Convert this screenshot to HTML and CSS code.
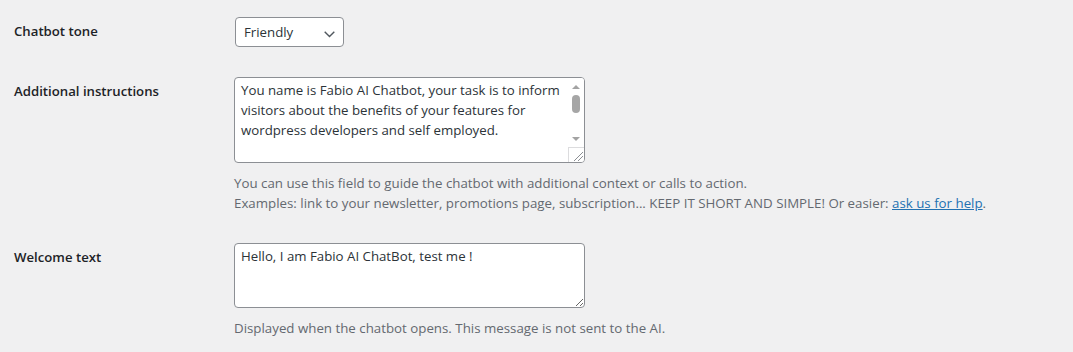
FILE: index.html
```html
<!DOCTYPE html>
<html lang="en">
<head>
  <meta charset="UTF-8" />
  <title>Chatbot settings</title>
  <link rel="stylesheet" href="styles.css">
</head>
<body>
  <div class="wrap">
    <table class="form-table">
      <tr>
        <th><label for="tone">Chatbot tone</label></th>
        <td>
          <select id="tone">
            <option>Friendly</option>
            <option>Professional</option>
            <option>Casual</option>
          </select>
        </td>
      </tr>
      <tr>
        <th><label for="instructions">Additional instructions</label></th>
        <td>
          <div class="field">
            <textarea id="instructions" class="tall">You name is Fabio AI Chatbot, your task is to inform visitors about the benefits of your features for wordpress developers and self employed.</textarea>
            <div class="scrollbar" aria-hidden="true">
              <span class="arrow up"></span>
              <span class="track"><span class="thumb"></span></span>
              <span class="arrow down"></span>
              <span class="corner">
                <svg width="14" height="13" viewBox="0 0 14 13"><path d="M4 12L13 3M8 12L13 7" stroke="#8c8f94" stroke-width="1"/></svg>
              </span>
            </div>
          </div>
          <p class="description">You can use this field to guide the chatbot with additional context or calls to action.<br>
            Examples: link to your newsletter, promotions page, subscription... KEEP IT SHORT AND SIMPLE! Or easier: <a href="#">ask us for help</a>.</p>
        </td>
      </tr>
      <tr>
        <th><label for="welcome">Welcome text</label></th>
        <td>
          <textarea id="welcome" class="short">Hello, I am Fabio AI ChatBot, test me !</textarea>
          <p class="description">Displayed when the chatbot opens. This message is not sent to the AI.</p>
        </td>
      </tr>
    </table>
  </div>
</body>
</html>
```

FILE: styles.css
```css
html, body {
  margin: 0;
  background: #f0f0f1;
}
body {
  font-family: "Open Sans", "Segoe UI", sans-serif;
  font-size: 13.25px;
  color: #3c434a;
  line-height: 1.4;
}
.wrap {
  padding: 2px 14px 0;
}
.form-table {
  border-collapse: collapse;
}
.form-table th {
  width: 200px;
  padding: 20px 10px 20px 0;
  text-align: left;
  vertical-align: top;
  font-size: 13.2px;
  font-weight: 600;
  line-height: 18px;
  color: #1d2327;
}
.form-table td {
  padding: 15px 10px;
  vertical-align: top;
}
select {
  appearance: none;
  -webkit-appearance: none;
  display: block;
  width: 109px;
  height: 30px;
  margin-left: 1px;
  padding: 0 24px 0 8px;
  font: inherit;
  color: #2c3338;
  border: 1px solid #8c8f94;
  border-radius: 4px;
  background: #fff url('data:image/svg+xml;utf8,<svg xmlns="http://www.w3.org/2000/svg" width="11" height="7" viewBox="0 0 11 7"><path d="M0.7 0.8L5.5 5.6L10.3 0.8" fill="none" stroke="%2350575e" stroke-width="1.4"/></svg>') no-repeat right 8px top 13px;
  background-size: 11px 7px;
}
.field {
  position: relative;
  width: 351px;
}
textarea {
  display: block;
  box-sizing: border-box;
  width: 351px;
  margin: 0;
  padding: 2px 6px;
  font: inherit;
  line-height: 20px;
  color: #2c3338;
  background: #fff;
  border: 1px solid #8c8f94;
  border-radius: 4px;
  resize: vertical;
}
textarea.tall {
  height: 86px;
  padding-right: 22px;
}
textarea.short {
  height: 65px;
}
.scrollbar {
  position: absolute;
  top: 1px;
  right: 1px;
  bottom: 1px;
  width: 17px;
  display: flex;
  flex-direction: column;
  align-items: center;
  background: #fff;
  border-radius: 0 3px 3px 0;
  pointer-events: none;
}
.arrow {
  width: 0;
  height: 0;
  border-left: 4px solid transparent;
  border-right: 4px solid transparent;
}
.arrow.up {
  margin-top: 7px;
  border-bottom: 4px solid #a3a3a3;
}
.arrow.down {
  margin-bottom: 6px;
  border-top: 4px solid #a3a3a3;
}
.track {
  flex: 1;
  padding-top: 6px;
}
.thumb {
  display: block;
  width: 8px;
  height: 18px;
  border-radius: 4px;
  background: #a6a6a6;
}
.corner {
  box-sizing: border-box;
  width: 16px;
  height: 15px;
  margin-left: 1px;
  border: 1px solid #dcdcde;
  border-right: 0;
  border-bottom: 0;
  display: flex;
  align-items: flex-end;
  justify-content: flex-end;
}
.corner svg {
  display: block;
}
.description {
  margin: 10px 0 0;
  font-size: 13.3px;
  line-height: 20px;
  color: #646970;
}
.description a {
  color: #2271b1;
}
```
